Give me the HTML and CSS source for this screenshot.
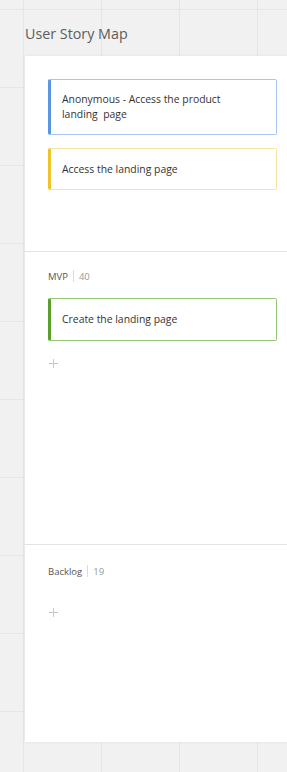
FILE: index.html
```html
<!DOCTYPE html>
<html>
<head>
<meta charset="utf-8">
<link rel="stylesheet" href="styles.css">
</head>
<body>
<div class="title">User Story Map</div>
<div class="panel">
  <section class="band band-top">
    <div class="card card-blue">Anonymous - Access the product landing&nbsp; page</div>
    <div class="card card-yellow">Access the landing page</div>
  </section>
  <section class="band band-mvp">
    <div class="label"><span class="name">MVP</span><span class="sep"></span><span class="count">40</span></div>
    <div class="card card-green">Create the landing page</div>
    <div class="add"><svg width="9" height="9" viewBox="0 0 9 9"><path d="M4.5 0v9M0 4.5h9" stroke="#c8c8c8" stroke-width="1"/></svg></div>
  </section>
  <section class="band band-backlog">
    <div class="label"><span class="name">Backlog</span><span class="sep"></span><span class="count">19</span></div>
    <div class="add add-backlog"><svg width="9" height="9" viewBox="0 0 9 9"><path d="M4.5 0v9M0 4.5h9" stroke="#c8c8c8" stroke-width="1"/></svg></div>
  </section>
</div>
</body>
</html>
```
FILE: styles.css
```css
html, body {
  margin: 0;
  padding: 0;
}
body {
  width: 287px;
  height: 772px;
  overflow: hidden;
  font-family: "Open Sans", "Noto Sans", sans-serif;
  background-color: #f1f1f1;
  background-image:
    linear-gradient(to right, #e6e6e6 1px, transparent 1px),
    linear-gradient(to bottom, #e6e6e6 1px, transparent 1px);
  background-size: 78px 78px;
  background-position: 23px 9px;
}
.title {
  height: 56px;
  box-sizing: border-box;
  padding: 24px 0 0 25px;
  font-size: 14.3px;
  line-height: 20px;
  color: #5c5c5c;
}
.panel {
  margin-left: 25px;
  height: 686px;
  background: #fff;
  box-shadow: 0 0 3px rgba(0,0,0,0.08);
  display: flex;
  flex-direction: column;
}
.band {
  box-sizing: border-box;
  padding-left: 23px;
  display: flex;
  flex-direction: column;
}
.band-top {
  height: 196px;
  padding-top: 23px;
  gap: 13px;
  border-bottom: 1px solid #e3e3e3;
}
.band-mvp {
  height: 293px;
  padding-top: 17px;
  border-bottom: 1px solid #e3e3e3;
}
.band-backlog {
  flex: 1;
  padding-top: 19px;
}
.card {
  box-sizing: border-box;
  width: 229px;
  border: 1px solid;
  border-left-width: 3px;
  border-radius: 2px;
  padding: 0 24px 0 11px;
  font-size: 10.4px;
  line-height: 15px;
  color: #333;
  display: flex;
  align-items: center;
}
.card-blue {
  height: 56px;
  border-color: #a9c6ee;
  border-left-color: #5b96e2;
}
.card-yellow {
  height: 42px;
  border-color: #f6e3a0;
  border-left-color: #f0c429;
}
.card-green {
  height: 43px;
  border-color: #93c974;
  border-left-color: #5a9f2b;
}
.label {
  display: flex;
  align-items: center;
  height: 14px;
  font-size: 9.5px;
  color: #555;
  margin-bottom: 15px;
}
.label .sep {
  width: 1px;
  height: 12px;
  background: #ddd;
  margin: 0 5px;
}
.label .count {
  color: #999;
}
.add {
  margin-top: 18px;
  padding-left: 1px;
  height: 9px;
  display: flex;
}
.add-backlog {
  margin-top: 15px;
}
```
